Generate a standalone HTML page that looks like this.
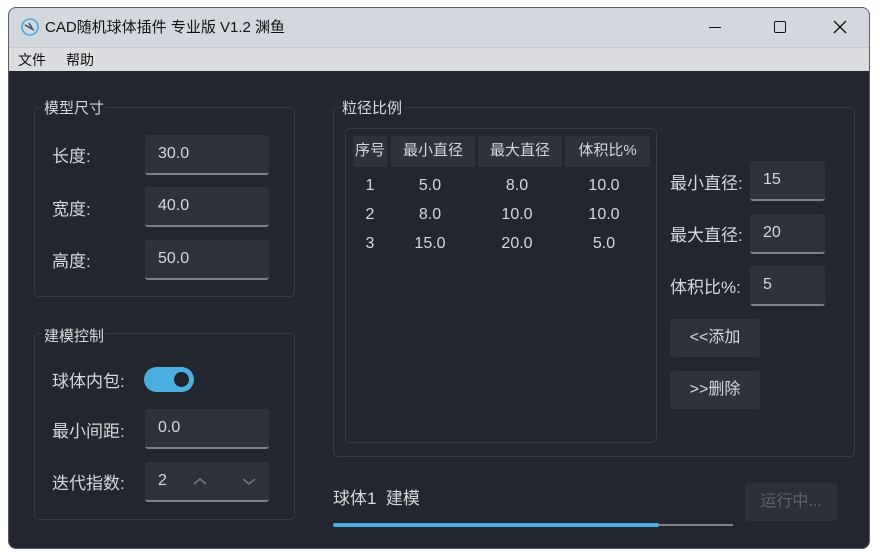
<!DOCTYPE html>
<html><head><meta charset="utf-8"><style>
*{margin:0;padding:0;box-sizing:border-box}
body{width:880px;height:559px;background:#fff;position:relative;overflow:hidden;font-family:"Liberation Sans","Noto Sans CJK SC",sans-serif;color:#d6d8dc;font-size:16px}
.a{position:absolute}
#win{left:8px;top:7px;width:862px;height:542px;border:1px solid #5a5e64;border-radius:8px;overflow:hidden;background:#22262e}
#title{left:0;top:0;width:862px;height:39px;background:#d3d8df;color:#111;font-size:15px}
#menu{left:0;top:39px;width:862px;height:24px;background:#dcdde0;color:#111;font-size:14px;border-top:1px solid #c8cacd}
.grp{border:1px solid #363b44;border-radius:5px}
.gl{background:#22262e;padding:0 2px;font-size:15px;color:#d6d8dc}
.inp{background:#2e333b;border-radius:3px;border-bottom:2px solid #7d8188;font-size:16px;padding-left:13px;line-height:38px;color:#d6d8dc}
.lbl{font-size:17px}
.hd{background:#2e333b;border-radius:3px;font-size:15px;text-align:center;line-height:30px}
.btn{background:#2e333b;border-radius:3px;font-size:16px;text-align:center;line-height:38px}
</style></head><body>
<div id="win" class="a">
 <div id="title" class="a">
  <svg class="a" style="left:11px;top:9px" width="20" height="20" viewBox="0 0 20 20"><circle cx="10" cy="10" r="8" fill="none" stroke="#4aa9dc" stroke-width="1.6"/><path d="M5 8 L14 13 M9 6 L12 11" stroke="#3a5a7a" stroke-width="1.6"/></svg>
  <span class="a" style="left:36px;top:8px">CAD随机球体插件 专业版 V1.2 渊鱼</span>
  <div class="a" style="left:700px;top:19px;width:12px;height:1px;background:#111"></div>
  <div class="a" style="left:765px;top:13px;width:12px;height:12px;border:1.3px solid #111;border-radius:2px"></div>
  <svg class="a" style="left:824px;top:12px" width="14" height="14"><path d="M1 1L13 13M13 1L1 13" stroke="#111" stroke-width="1.3"/></svg>
 </div>
 <div id="menu" class="a"><span class="a" style="left:9px;top:2px">文件</span><span class="a" style="left:57px;top:2px">帮助</span></div>

 <div class="a grp" style="left:25px;top:99px;width:261px;height:190px"></div>
 <span class="a gl" style="left:33px;top:89px">模型尺寸</span>
 <span class="a lbl" style="left:43px;top:134px">长度:</span>
 <div class="a inp" style="left:136px;top:127px;width:124px;height:40px">30.0</div>
 <span class="a lbl" style="left:43px;top:187px">宽度:</span>
 <div class="a inp" style="left:136px;top:179px;width:124px;height:40px">40.0</div>
 <span class="a lbl" style="left:43px;top:239px">高度:</span>
 <div class="a inp" style="left:136px;top:232px;width:124px;height:40px">50.0</div>

 <div class="a grp" style="left:25px;top:325px;width:261px;height:187px"></div>
 <span class="a gl" style="left:33px;top:317px">建模控制</span>
 <span class="a lbl" style="left:43px;top:359px">球体内包:</span>
 <div class="a" style="left:135px;top:359px;width:50px;height:25px;border-radius:13px;background:#4aaee0"></div>
 <div class="a" style="left:165px;top:364px;width:15px;height:15px;border-radius:50%;background:#1f232b"></div>
 <span class="a lbl" style="left:43px;top:409px">最小间距:</span>
 <div class="a inp" style="left:136px;top:401px;width:124px;height:40px">0.0</div>
 <span class="a lbl" style="left:43px;top:461px">迭代指数:</span>
 <div class="a inp" style="left:136px;top:454px;width:124px;height:40px">2</div>
 <svg class="a" style="left:184px;top:469px" width="70" height="10"><path d="M1 7L7 2L13 7M50 2L56 7L62 2" fill="none" stroke="#7d8188" stroke-width="1.3"/></svg>

 <div class="a grp" style="left:324px;top:99px;width:522px;height:350px"></div>
 <span class="a gl" style="left:331px;top:89px">粒径比例</span>
 <div class="a grp" style="left:336px;top:120px;width:312px;height:315px"></div>
 <div class="a hd" style="left:344px;top:128px;width:34px;height:31px">序号</div>
 <div class="a hd" style="left:382px;top:128px;width:84px;height:31px">最小直径</div>
 <div class="a hd" style="left:469px;top:128px;width:84px;height:31px">最大直径</div>
 <div class="a hd" style="left:556px;top:128px;width:85px;height:31px">体积比%</div>
 <div class="a" style="left:344px;top:163px;width:300px;line-height:29px;font-size:16px">
  <div style="display:flex"><span style="width:34px;text-align:center">1</span><span style="width:86px;text-align:center">5.0</span><span style="width:88px;text-align:center">8.0</span><span style="width:86px;text-align:center">10.0</span></div>
  <div style="display:flex"><span style="width:34px;text-align:center">2</span><span style="width:86px;text-align:center">8.0</span><span style="width:88px;text-align:center">10.0</span><span style="width:86px;text-align:center">10.0</span></div>
  <div style="display:flex"><span style="width:34px;text-align:center">3</span><span style="width:86px;text-align:center">15.0</span><span style="width:88px;text-align:center">20.0</span><span style="width:86px;text-align:center">5.0</span></div>
 </div>
 <span class="a lbl" style="left:661px;top:161px">最小直径:</span>
 <div class="a inp" style="left:741px;top:153px;width:75px;height:40px">15</div>
 <span class="a lbl" style="left:661px;top:213px">最大直径:</span>
 <div class="a inp" style="left:741px;top:206px;width:75px;height:40px">20</div>
 <span class="a lbl" style="left:661px;top:265px">体积比%:</span>
 <div class="a inp" style="left:741px;top:258px;width:75px;height:40px">5</div>
 <div class="a btn" style="left:661px;top:311px;width:90px;height:38px">&lt;&lt;添加</div>
 <div class="a btn" style="left:661px;top:363px;width:90px;height:38px">&gt;&gt;删除</div>

 <span class="a lbl" style="left:324px;top:476px">球体1&nbsp; 建模</span>
 <div class="a" style="left:324px;top:516px;width:400px;height:2px;background:#7d8188"></div>
 <div class="a" style="left:324px;top:515px;width:326px;height:4px;border-radius:2px;background:#4aaee0"></div>
 <div class="a btn" style="left:736px;top:475px;width:92px;height:38px;color:#5d636c;background:#2c3139">运行中...</div>
</div>
</body></html>
